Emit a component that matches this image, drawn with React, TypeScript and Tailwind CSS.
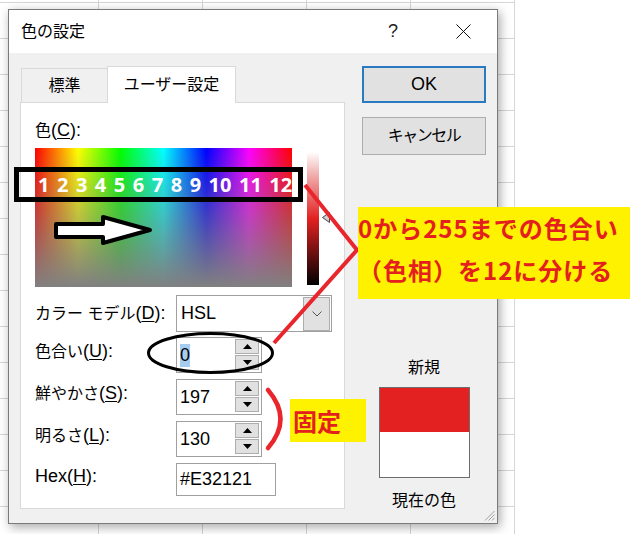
import React from "react";

function Lbl({ jp, k, pre }: { jp: string; k: string; pre?: string }) {
  return (
    <span className="whitespace-nowrap">
      {pre ? <span className="text-[18px]">{pre}</span> : null}
      <span className="text-[16px]">{jp}</span>
      <span className="text-[18px]">
        (<span className="underline underline-offset-[2px]">{k}</span>):
      </span>
    </span>
  );
}

function SpinBtn() {
  return (
    <div className="w-[24px] h-[32px] flex flex-col gap-[1px]">
      <div className="h-[15px] bg-[#e1e1e1] border border-[#adadad] flex items-center justify-center">
        <svg width="9" height="5" viewBox="0 0 9 5">
          <polygon points="4.5,0 9,5 0,5" fill="#000" />
        </svg>
      </div>
      <div className="h-[15px] bg-[#e1e1e1] border border-[#adadad] flex items-center justify-center">
        <svg width="9" height="5" viewBox="0 0 9 5">
          <polygon points="0,0 9,0 4.5,5" fill="#000" />
        </svg>
      </div>
    </div>
  );
}

function SpinRow({ label, value, selected }: { label: React.ReactNode; value: string; selected?: boolean }) {
  return (
    <div className="flex items-center h-[36px]">
      <div className="w-[141px] mb-[8px]">{label}</div>
      <div className="w-[86px] h-[36px] border border-[#a0a0a0] bg-white flex items-center pl-[3px] pr-[2px]">
        <div className="flex-1 text-[18px]">
          {selected ? <span className="bg-[#a6cdf0] leading-[23px] inline-block">{value}</span> : value}
        </div>
        <SpinBtn />
      </div>
    </div>
  );
}

export default function App() {
  const nums = ["1", "2", "3", "4", "5", "6", "7", "8", "9", "10", "11", "12"];
  return (
    <div className="relative w-[635px] h-[534px] overflow-hidden bg-white text-black font-['Liberation_Sans','Noto_Sans_CJK_JP',sans-serif] flex">
      {/* spreadsheet grid */}
      <div className="w-[515px] h-[534px] bg-[linear-gradient(to_right,#d6d6d6_1px,transparent_1px),linear-gradient(to_bottom,#d6d6d6_1px,transparent_1px)] bg-[size:104px_36px] bg-[position:98px_2px]" />

      {/* dialog window */}
      <div className="absolute left-[8px] top-[9px] w-[490px] h-[515px] border border-[#7a7a7a] bg-[#f0f0f0] shadow-[2px_3px_10px_rgba(0,0,0,0.35)] flex flex-col">
        <div className="h-[43px] bg-white flex items-center shrink-0">
          <div className="pl-[12px] text-[16px] flex-1">色の設定</div>
          <div className="w-[40px] text-center text-[18px] text-[#222]">?</div>
          <div className="w-[30px]" />
          <div className="w-[40px] flex justify-center">
            <svg width="15" height="15" viewBox="0 0 15 15">
              <line x1="0.5" y1="0.5" x2="14.5" y2="14.5" stroke="#111" strokeWidth="1" />
              <line x1="14.5" y1="0.5" x2="0.5" y2="14.5" stroke="#111" strokeWidth="1" />
            </svg>
          </div>
          <div className="w-[14px]" />
        </div>

        <div className="flex flex-1 pt-[13px] pl-[11px]">
          {/* left column */}
          <div className="w-[325px] flex flex-col">
            <div className="flex items-end h-[36px]">
              <div className="ml-[1px] w-[86px] h-[34px] border border-r-0 border-b-0 border-[#d9d9d9] flex items-center justify-center text-[16px]">
                標準
              </div>
              <div className="relative z-10 -mb-px w-[129px] h-[37px] bg-white border border-b-0 border-[#d9d9d9] flex items-center justify-center text-[16px] pb-[1px]">
                ユーザー設定
              </div>
            </div>
            <div className="h-[407px] bg-white border border-[#d9d9d9] pl-[14px] flex flex-col">
              <div className="mt-[17px] h-[20px] leading-[20px]">
                <Lbl jp="色" k="C" />
              </div>
              <div className="mt-[8px] flex items-start">
                <div className="w-[257px] h-[139px] bg-[linear-gradient(to_bottom,rgba(128,128,128,0),#808080),linear-gradient(to_right,#ff0000,#ffff00,#00ff00,#00ffff,#0000ff,#ff00ff,#ff0000)]" />
                <div className="ml-[15px] mt-[4px] w-[12px] h-[133px] bg-[linear-gradient(to_bottom,#ffffff,#f2b8b8_15%,#e32121_50%,#000000)]" />
                <div className="ml-[3px] mt-[64px]">
                  <svg width="8" height="11" viewBox="0 0 8 11">
                    <polygon points="0.5,5.5 7.5,0.5 7.5,10.5" fill="#d0d0d0" stroke="#444" strokeWidth="1" />
                  </svg>
                </div>
              </div>
              <div className="mt-[8px] flex items-center h-[37px]">
                <div className="w-[141px]">
                  <span className="text-[16px]">カラー モデル</span>
                  <span className="text-[18px]">
                    (<span className="underline underline-offset-[2px]">D</span>):
                  </span>
                </div>
                <div className="w-[156px] h-[37px] border border-[#a0a0a0] bg-white flex items-center">
                  <div className="flex-1 pl-[4px] text-[18px]">HSL</div>
                  <div className="mr-[1px] w-[27px] h-[34px] border border-[#adadad] bg-[#e1e1e1] flex items-center justify-center">
                    <svg width="10" height="6" viewBox="0 0 10 6">
                      <polyline points="0.5,0.5 5,5 9.5,0.5" fill="none" stroke="#555" strokeWidth="1" />
                    </svg>
                  </div>
                </div>
              </div>
              <div className="mt-[5px] flex flex-col gap-[6px]">
                <SpinRow label={<Lbl jp="色合い" k="U" />} value="0" selected />
                <SpinRow label={<Lbl jp="鮮やかさ" k="S" />} value="197" />
                <SpinRow label={<Lbl jp="明るさ" k="L" />} value="130" />
              </div>
              <div className="mt-[6px] flex items-center h-[33px]">
                <div className="w-[141px] mb-[6px]">
                  <span className="text-[18px]">
                    Hex(<span className="underline underline-offset-[2px]">H</span>):
                  </span>
                </div>
                <div className="w-[100px] h-[33px] border border-[#a0a0a0] bg-white flex items-center pl-[3px] text-[18px]">
                  #E32121
                </div>
              </div>
            </div>
          </div>

          {/* right column */}
          <div className="ml-[17px] w-[124px] flex flex-col items-center">
            <div className="w-full h-[37px] border-2 border-[#2a7ac2] bg-[#e1e1e1] flex items-center justify-center text-[18px]">
              OK
            </div>
            <div className="mt-[14px] w-full h-[38px] border border-[#adadad] bg-[#e1e1e1] flex items-center justify-center text-[16px] tracking-[-1.5px]">
              キャンセル
            </div>
            <div className="mt-[203px] h-[20px] leading-[20px] text-[16px]">新規</div>
            <div className="mt-[9px] w-[91px] h-[91px] border border-[#6d6d6d] flex flex-col">
              <div className="h-[44px] bg-[#e32121]" />
              <div className="flex-1 bg-white" />
            </div>
            <div className="mt-[13px] h-[20px] leading-[20px] text-[16px]">現在の色</div>
          </div>
        </div>

        {/* resize grip */}
        <div className="absolute right-[2px] bottom-[2px]">
          <svg width="12" height="12" viewBox="0 0 12 12">
            <line x1="11.5" y1="2" x2="2" y2="11.5" stroke="#a0a0a0" strokeWidth="1" />
            <line x1="11.5" y1="5.5" x2="5.5" y2="11.5" stroke="#a0a0a0" strokeWidth="1" />
            <line x1="11.5" y1="9" x2="9" y2="11.5" stroke="#a0a0a0" strokeWidth="1" />
          </svg>
        </div>
      </div>

      {/* annotation: black rectangle with numbers */}
      <div className="absolute left-[14px] top-[167px] w-[289px] h-[35px] border-[5px] border-black flex items-center pl-[19px] gap-[7.5px] font-['Noto_Sans',sans-serif] font-bold text-[20px] text-white leading-none">
        {nums.map((n) => (
          <span key={n}>{n}</span>
        ))}
      </div>

      {/* annotation drawings */}
      <svg className="absolute left-0 top-0 pointer-events-none" width="635" height="534" viewBox="0 0 635 534">
        <polygon
          points="56,224 103,224 103,217 150,230 103,243 103,237 56,237"
          fill="#fff"
          stroke="#000"
          strokeWidth="4"
          strokeLinejoin="round"
        />
        <ellipse cx="210.5" cy="353" rx="62" ry="19.5" fill="none" stroke="#000" strokeWidth="3" />
        <polyline points="305,185 357,250 274,343" fill="none" stroke="#e8262c" strokeWidth="4" />
        <path d="M268,390 Q293,419 268,448" fill="none" stroke="#e8262c" strokeWidth="4.5" strokeLinecap="round" />
      </svg>

      {/* yellow callouts */}
      <div className="absolute left-[358px] top-[207px] w-[272px] h-[92px] bg-[#fff200] text-[#e4201f] font-['Noto_Sans_CJK_JP',sans-serif] font-bold text-[24px] leading-[42px] tracking-[1px]">
        <div>0から255までの色合い</div>
        <div>（色相）を12に分ける</div>
      </div>
      <div className="absolute left-[290px] top-[399px] w-[76px] h-[43px] bg-[#fff200] text-[#e4201f] font-['Noto_Sans_CJK_JP',sans-serif] font-bold text-[24px] leading-[43px] pl-[3px]">
        固定
      </div>
    </div>
  );
}
